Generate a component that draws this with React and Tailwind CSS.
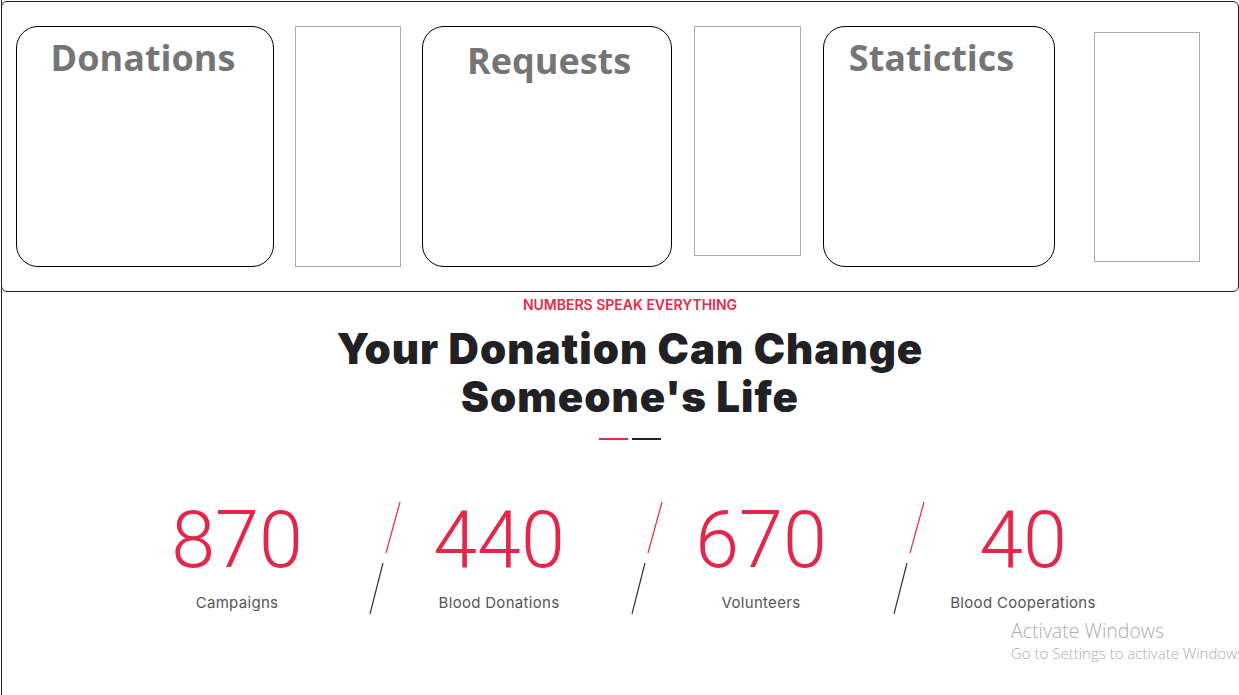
const stats = [
  { value: '870', label: 'Campaigns' },
  { value: '440', label: 'Blood Donations' },
  { value: '670', label: 'Volunteers' },
  { value: '40', label: 'Blood Cooperations' },
];

const Slash = () => (
  <svg className="absolute left-px top-[7px]" width="32" height="112" viewBox="0 0 32 112" fill="none">
    <line x1="31" y1="0" x2="17" y2="51" stroke="#e6294b" strokeWidth="1.2" />
    <line x1="14" y1="61" x2="1" y2="112" stroke="#333" strokeWidth="1.2" />
  </svg>
);

const App = () => {
  return (
    <div className="relative ml-px min-h-[695px] overflow-hidden border-l border-[#222] bg-white">
      {/* top panel */}
      <div className="-ml-px mt-px h-[291px] w-[1238px] rounded-[6px] border border-[#222] pl-[14px] pt-[24px]">
        <div className="flex items-start font-['Open_Sans',sans-serif] text-[36px] font-bold leading-[1.2] text-[#757575]">
          <div className="h-[241px] w-[258px] rounded-[22px] border border-black pr-[4px] pt-[9px] text-center">Donations</div>
          <div className="ml-[21px] h-[241px] w-[106px] border border-[#aaa]" />
          <div className="ml-[21px] h-[241px] w-[250px] rounded-[22px] border border-black pl-[4px] pt-[12px] text-center">Requests</div>
          <div className="ml-[22px] h-[230px] w-[107px] border border-[#aaa]" />
          <div className="ml-[22px] h-[241px] w-[232px] rounded-[22px] border border-black pr-[15px] pt-[9px] text-center">Statictics</div>
          <div className="ml-[39px] mt-[6px] h-[230px] w-[106px] border border-[#aaa]" />
        </div>
      </div>

      {/* counters */}
      <div className="pl-[19px] text-center font-['Inter',sans-serif]">
        <p className="mt-[3px] text-[14px] font-semibold leading-[20px] text-[#e6294b]">NUMBERS SPEAK EVERYTHING</p>
        <h2 className="mt-[10px] text-[42px] font-black leading-[48px] tracking-[1px] text-[#212125]">
          Your Donation Can Change
          <br />
          Someone's Life
        </h2>
        <div className="mt-[17px] flex justify-center gap-[4px]">
          <span className="h-[2px] w-[29px] bg-[#e6294b]" />
          <span className="h-[2px] w-[29px] bg-[#222]" />
        </div>

        <div className="mx-auto mt-[55px] grid w-[1048px] grid-cols-4">
          {stats.map((s, i) => (
            <div key={s.label} className="relative h-[130px]">
              {i > 0 && <Slash />}
              <div className="font-['Roboto',sans-serif] text-[79px] font-light leading-[90px] text-[#e3264a]">
                {s.value}
              </div>
              <div className="mt-[8px] text-[15px] leading-[20px] tracking-[0.3px] text-[#555]">{s.label}</div>
            </div>
          ))}
        </div>
      </div>

      {/* windows watermark */}
      <div className="absolute left-[1009px] top-[619px] whitespace-nowrap font-['Open_Sans',sans-serif] font-light text-[#ababab]">
        <div className="text-[19.5px] leading-[24px]">Activate Windows</div>
        <div className="text-[15px] leading-[20px]">Go to Settings to activate Windows.</div>
      </div>
    </div>
  );
};

export default App;
